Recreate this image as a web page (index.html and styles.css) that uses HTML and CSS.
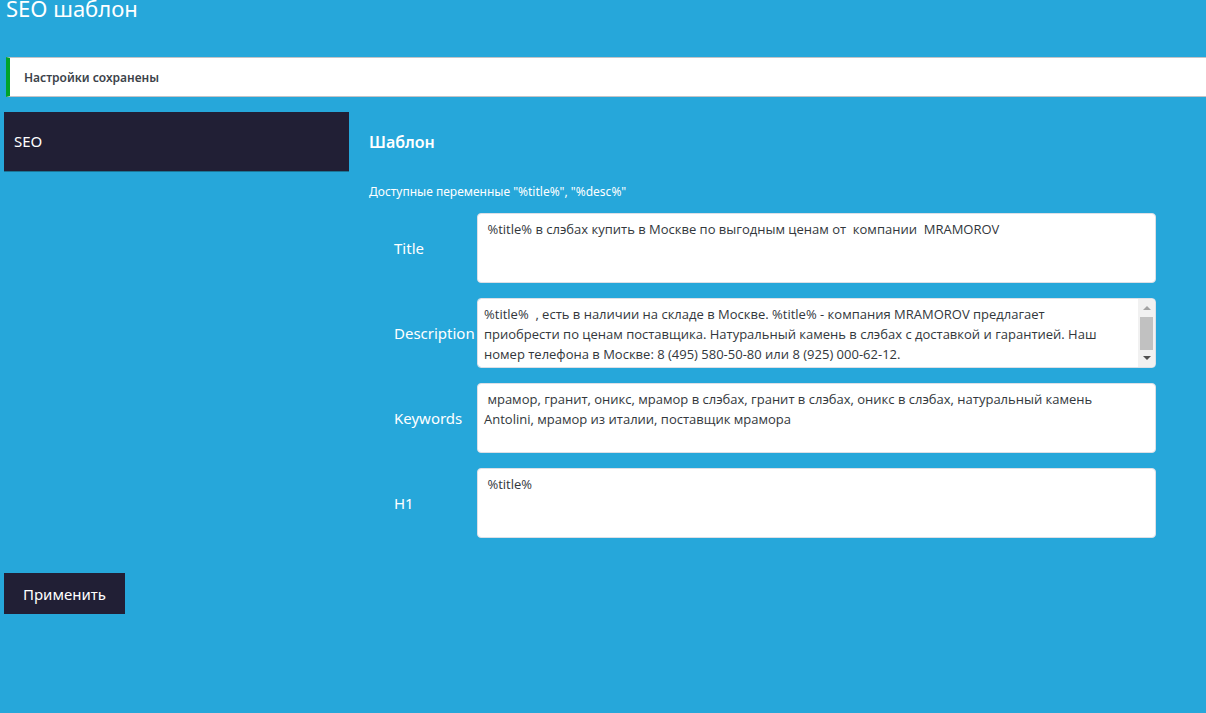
FILE: index.html
```
<!DOCTYPE html>
<html lang="ru">
<head>
<meta charset="utf-8">
<meta name="viewport" content="width=device-width, initial-scale=1">
<title>SEO шаблон</title>
<link rel="stylesheet" href="styles.css">
</head>
<body>
<main class="page">
  <h1 class="page-title">SEO шаблон</h1>
  <div class="notice" role="status">Настройки сохранены</div>
  <form class="settings">
    <div class="columns">
      <nav class="tabs"><a class="tab" href="#seo">SEO</a></nav>
      <section class="panel" id="seo">
        <h2 class="panel-title">Шаблон</h2>
        <p class="hint">Доступные переменные "%title%", "%desc%"</p>
        <div class="fields">
          <div class="field">
            <label class="label" for="title">Title</label>
            <textarea class="input" id="title"> %title% в слэбах купить в Москве по выгодным ценам от  компании  MRAMOROV</textarea>
          </div>
          <div class="field">
            <label class="label" for="description">Description</label>
            <textarea class="input" id="description">%title%  , есть в наличии на складе в Москве. %title% - компания MRAMOROV предлагает приобрести по ценам поставщика. Натуральный камень в слэбах с доставкой и гарантией. Наш номер телефона в Москве: 8 (495) 580-50-80 или 8 (925) 000-62-12.</textarea>
            <div class="scrollbar" aria-hidden="true">
              <svg class="arrow arrow-up" viewBox="0 0 8 4"><path d="M0 4L4 0l4 4z"/></svg>
              <div class="thumb"></div>
              <svg class="arrow" viewBox="0 0 8 4"><path d="M0 0h8L4 4z"/></svg>
            </div>
          </div>
          <div class="field">
            <label class="label" for="keywords">Keywords</label>
            <textarea class="input" id="keywords"> мрамор, гранит, оникс, мрамор в слэбах, гранит в слэбах, оникс в слэбах, натуральный камень Antolini, мрамор из италии, поставщик мрамора</textarea>
          </div>
          <div class="field">
            <label class="label" for="h1">H1</label>
            <textarea class="input" id="h1"> %title%</textarea>
          </div>
        </div>
      </section>
    </div>
    <button class="submit" type="submit">Применить</button>
  </form>
</main>
</body>
</html>
```
FILE: styles.css
```
* { box-sizing: border-box; }

body {
  margin: 0;
  background: #26a7da;
  color: #fff;
  font-family: "Segoe UI", "Noto Sans", "Open Sans", sans-serif;
  font-size: 15px;
}

.page { padding-left: 4px; }

.page-title {
  margin: 0 2px 41px;
  font-size: 22px;
  font-weight: 400;
  line-height: 16px;
}

.notice {
  margin: 0 0 15px 2px;
  padding: 10px 14px 8px;
  border: 1px solid #c3c4c7;
  border-left: 4px solid #00a32a;
  border-right: 0;
  background: #fff;
  color: #3c434a;
  font-size: 12px;
  font-weight: 600;
  line-height: 20px;
}

.columns { display: flex; align-items: flex-start; }

.tabs { flex: 0 0 345px; }

.tab {
  display: block;
  padding: 19px 10px 20px;
  border-bottom: 1px solid #1b7597;
  background: #211f35;
  color: #fff;
  line-height: 20px;
  text-decoration: none;
}

.panel { flex: 1; min-width: 0; padding: 20px 50px 0 20px; }

.panel-title {
  margin: 0 0 30px;
  font-size: 16px;
  font-weight: 600;
  line-height: 20px;
}

.hint { margin: 0 0 11px; font-size: 12px; line-height: 20px; }

.fields { display: flex; flex-direction: column; gap: 15px; padding-left: 25px; }

.field { position: relative; display: flex; align-items: center; }

.label { flex: 0 0 83px; line-height: 20px; }

.input {
  flex: 1;
  min-width: 0;
  height: 70px;
  padding: 5px 40px 5px 6px;
  border: 1px solid #dcdfe6;
  border-radius: 4px;
  background: #fff;
  color: #32373c;
  font-family: "Segoe UI", "Open Sans", "Noto Sans", sans-serif;
  font-size: 13px;
  line-height: 20px;
  resize: none;
}

.scrollbar {
  position: absolute;
  top: 1px;
  right: 1px;
  bottom: 1px;
  display: flex;
  flex-direction: column;
  align-items: center;
  justify-content: space-between;
  width: 17px;
  padding: 7px 0;
  border-radius: 0 3px 3px 0;
  background: #f1f1f1;
}

.thumb { width: 13px; height: 33px; background: #c1c1c1; }

.arrow { width: 8px; height: 4px; fill: #505050; }

.arrow-up { fill: #a3a3a3; }

.submit {
  display: block;
  margin-top: 35px;
  padding: 11px 19px 9px;
  border: 0;
  background: #211f35;
  color: #fff;
  font-family: inherit;
  font-size: 15px;
  line-height: 21px;
}
```
